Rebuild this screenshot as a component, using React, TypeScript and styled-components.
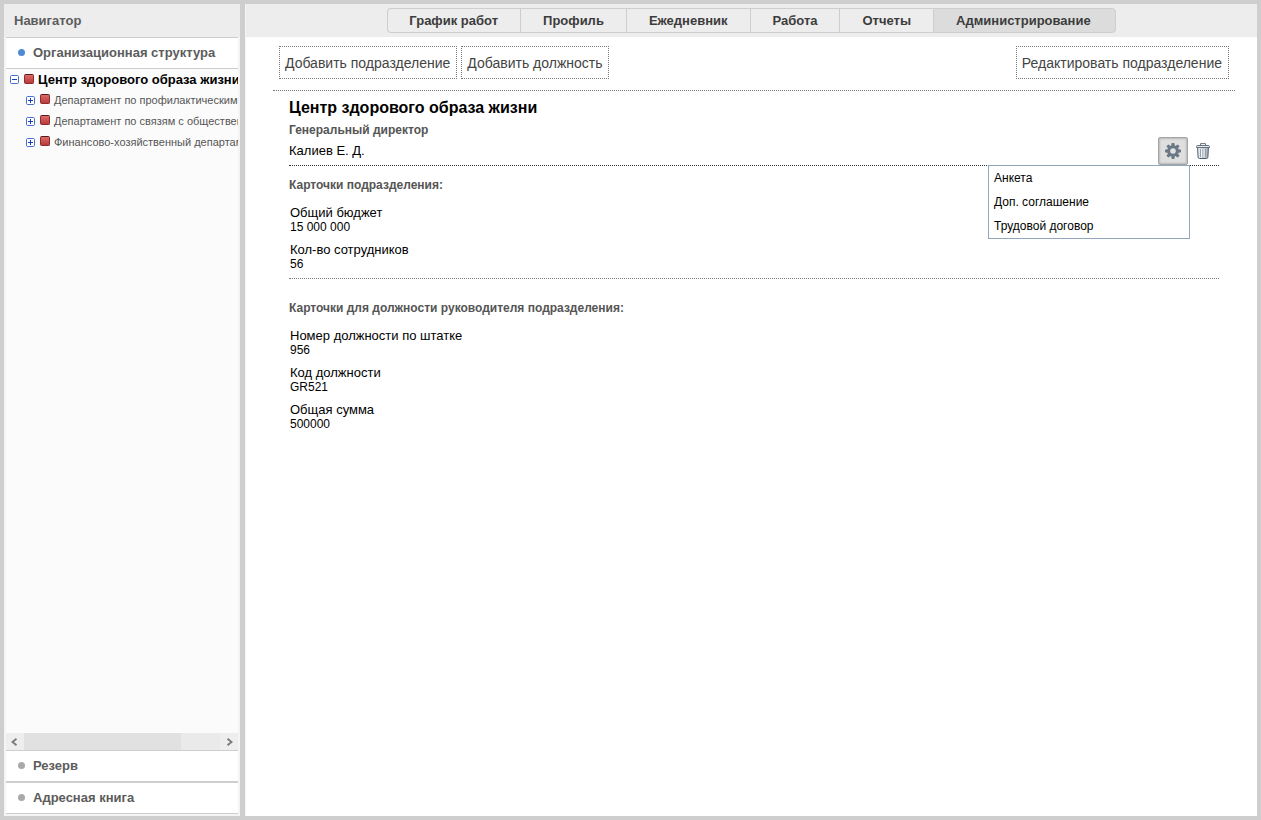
import React, { useState } from "react";
import styled, { createGlobalStyle } from "styled-components";

const GlobalStyle = createGlobalStyle`
  *, *::before, *::after { box-sizing: border-box; }
  html, body { margin: 0; }
  body, button {
    font-family: "Liberation Sans", Arial, Helvetica, sans-serif;
    font-size: 13px;
    color: #000;
  }
  button { margin: 0; padding: 0; border: 0; background: none; cursor: pointer; }
  h1, h2, h3, dl, dd, ul { margin: 0; padding: 0; }
  ul { list-style: none; }
  svg { display: block; flex: none; }
`;

const Shell = styled.div`
  display: flex;
  gap: 5px;
  min-height: 100vh;
  padding: 4px;
  background: #cecece;
`;

const Sidebar = styled.aside`
  display: flex;
  flex-direction: column;
  flex: 0 0 236px;
  min-width: 0;
  padding: 0 2px 2px;
  background: #f4f4f4;
`;

const SidebarTitle = styled.h2`
  height: 33px;
  margin: 0 -2px;
  padding-left: 10px;
  background: #ededed;
  font-size: 13px;
  line-height: 33px;
  color: #5c5c5c;
`;

const SectionButton = styled.button<{ $active?: boolean }>`
  display: flex;
  align-items: center;
  flex: none;
  gap: 8px;
  height: 32px;
  padding: 0 0 2px 12px;
  border-top: 1px solid #cecece;
  border-bottom: 1px solid #cecece;
  background: #fff;
  font-weight: bold;
  color: #5c5c5c;

  &::before {
    content: "";
    width: 7px;
    height: 7px;
    border-radius: 50%;
    background: ${(p) => (p.$active ? "#4f8ad5" : "#a9a9a9")};
  }
`;

const TreePane = styled.div`
  flex: 1;
  overflow: hidden;
  background: #fbfbfb;
`;

const Tree = styled.ul`
  white-space: nowrap;
`;

const TreeRow = styled.div<{ $root?: boolean }>`
  display: flex;
  align-items: center;
  gap: 4px;
  height: 21px;
  padding-left: ${(p) => (p.$root ? "4px" : "20px")};
  font-size: ${(p) => (p.$root ? "13px" : "11px")};
  font-weight: ${(p) => (p.$root ? "bold" : "normal")};
  line-height: ${(p) => (p.$root ? "21px" : "20px")};
  color: ${(p) => (p.$root ? "#000" : "#555")};
`;

const UnitName = styled.span`
  align-self: flex-start;
`;

const Toggle = styled.button`
  display: flex;
  flex: none;
  margin-right: 1px;
`;

const UnitIcon = styled.span<{ $root?: boolean }>`
  flex: none;
  width: 10px;
  height: 10px;
  margin-bottom: ${(p) => (p.$root ? "2px" : "4px")};
  border: 1px solid #8c2a2c;
  border-top-color: #561a1c;
  border-radius: 2px;
  background: linear-gradient(#de6a68, #b93a3c);
`;

const ScrollBar = styled.div`
  display: flex;
  flex: none;
  height: 17px;
  background: #eaeaea;
`;

const ScrollButton = styled.button`
  display: grid;
  place-items: center;
  flex: 0 0 18px;
  background: #eee;
`;

const ScrollTrack = styled.div`
  flex: 1;
`;

const ScrollThumb = styled.div`
  width: 80%;
  height: 100%;
  background: #e1e1e1;
`;

const Main = styled.main`
  flex: 1;
  min-width: 0;
  border-left: 1px solid #f4f4f4;
  background: #fff;
`;

const TabBar = styled.nav`
  display: flex;
  justify-content: center;
  height: 33px;
  padding: 4px 0;
  background: #ededed;
`;

const Tab = styled.button<{ $active?: boolean }>`
  padding: 0 22px;
  border: 1px solid #cecece;
  border-right-width: 0;
  background: ${(p) => (p.$active ? "#dcdcdc" : "#ededed")};
  font-weight: bold;
  color: #3c3c3c;

  &:first-child { padding-left: 21px; border-radius: 4px 0 0 4px; }
  &:last-child { padding-right: 24px; border-right-width: 1px; border-radius: 0 4px 4px 0; }
`;

const Page = styled.div`
  padding: 9px 22px 20px 27px;
`;

const Toolbar = styled.div`
  display: flex;
  gap: 4px;
  padding: 0 6px 11px;
  border-bottom: 1px dotted #777;
`;

const ToolbarButton = styled.button<{ $end?: boolean }>`
  height: 33px;
  padding: 0 6px 0 5px;
  margin-left: ${(p) => (p.$end ? "auto" : "0")};
  border: 1px dotted #777;
  font-size: 14px;
  color: #444;
`;

const Details = styled.div`
  padding: 7px 16px 0;
`;

const UnitTitle = styled.h1`
  margin-bottom: 5px;
  font-size: 16px;
  line-height: 20px;
`;

const Position = styled.h2`
  font-size: 12px;
  line-height: 14px;
  color: #555;
`;

const PersonRow = styled.div`
  position: relative;
  display: flex;
  height: 29px;
  border-bottom: 1px dotted #333;
`;

const PersonName = styled.span`
  flex: 1;
  line-height: 27px;
`;

const GearButton = styled.button`
  display: grid;
  place-items: center;
  width: 30px;
  height: 28px;
  border: 1px solid #a5a5a5;
  border-radius: 2px;
  background: #dfdfdf;
  box-shadow: inset 0 0 2px 1px #b9b9b9;
`;

const TrashButton = styled.button`
  display: grid;
  place-items: center;
  width: 31px;
  height: 28px;
  padding-right: 1px;
`;

const Menu = styled.ul`
  position: absolute;
  top: 28px;
  right: 29px;
  width: 202px;
  border: 1px solid #90a7bc;
  background: #fff;
`;

const MenuItem = styled.button`
  width: 100%;
  height: 24px;
  padding: 0 5px;
  font-size: 12px;
  text-align: left;
`;

const CardSection = styled.section<{ $spaced?: boolean }>`
  padding: ${(p) => (p.$spaced ? "21px" : "11px")} 0 7px;

  & + & { border-top: 1px dotted #777; }
`;

const CardHeading = styled.h3`
  margin-bottom: 12px;
  font-size: 12px;
  line-height: 16px;
  color: #555;
`;

const Fields = styled.dl`
  display: grid;
  gap: 8px;
  padding-left: 1px;
`;

const FieldLabel = styled.dt`
  line-height: 15px;
`;

const FieldValue = styled.dd`
  font-size: 12px;
  line-height: 14px;
`;

const ToggleIcon = ({ open }: { open?: boolean }) => (
  <svg width="9" height="9" viewBox="0 0 9 9">
    <rect x=".5" y=".5" width="8" height="8" rx="1.2" fill="#fff" stroke="#4a6fd0" />
    <path d={open ? "M2 4.5h5" : "M2 4.5h5M4.5 2v5"} stroke="#1c3fae" />
  </svg>
);

const Arrow = ({ right }: { right?: boolean }) => (
  <svg width="8" height="8" viewBox="0 0 8 8">
    <path
      d={right ? "M2.5 .8L6.5 4L2.5 7.2" : "M5.5 .8L1.5 4L5.5 7.2"}
      fill="none"
      stroke="#7d7d7d"
      strokeWidth="2"
    />
  </svg>
);

const GearIcon = () => (
  <svg width="16" height="16" viewBox="-8 -8 16 16">
    <g fill="#6b7885">
      {[0, 45, 90, 135].map((angle) => (
        <path key={angle} d="M-1.9-5L-1.3-8H1.3L1.9-5V5L1.3 8H-1.3L-1.9 5Z" transform={`rotate(${angle})`} />
      ))}
      <circle r="5.4" />
    </g>
    <circle r="2.8" fill="#e2e2e2" />
  </svg>
);

const TrashIcon = () => (
  <svg width="14" height="16" viewBox="0 0 14 16">
    <defs>
      <linearGradient id="can" x1="0" x2="1" y1="0" y2="0">
        <stop offset="0" stopColor="#f2f5f7" />
        <stop offset="1" stopColor="#a3aeb8" />
      </linearGradient>
    </defs>
    <path d="M4.5 2V.6h5V2" fill="none" stroke="#66727e" />
    <path d="M1.6 4.5h10.8l-.5 9.6q-.1 1.4-1.4 1.4H3.5q-1.3 0-1.4-1.4Z" fill="url(#can)" stroke="#4f5d6b" />
    <path d="M4.5 6v8M7 6v8M9.5 6v8" stroke="#93a0ab" />
    <path d="M5.5 6v8M8 6v8" stroke="#fff" strokeWidth=".8" />
    <path d="M.5 4.5V3.6Q.5 2.5 1.8 2.5H12.2Q13.5 2.5 13.5 3.6V4.5Z" fill="#e6eaee" stroke="#66727e" />
  </svg>
);

const tabs = ["График работ", "Профиль", "Ежедневник", "Работа", "Отчеты", "Администрирование"];

const departments = [
  "Департамент по профилактическим программам",
  "Департамент по связям с общественностью",
  "Финансово-хозяйственный департамент",
];

const documents = ["Анкета", "Доп. соглашение", "Трудовой договор"];

const unitCards = [
  ["Общий бюджет", "15 000 000"],
  ["Кол-во сотрудников", "56"],
];

const headCards = [
  ["Номер должности по штатке", "956"],
  ["Код должности", "GR521"],
  ["Общая сумма", "500000"],
];

const FieldList = ({ items }: { items: string[][] }) => (
  <Fields>
    {items.map(([label, value]) => (
      <div key={label}>
        <FieldLabel>{label}</FieldLabel>
        <FieldValue>{value}</FieldValue>
      </div>
    ))}
  </Fields>
);

export default function App() {
  const [activeTab, setActiveTab] = useState("Администрирование");
  const [menuOpen, setMenuOpen] = useState(true);

  return (
    <Shell>
      <GlobalStyle />
      <Sidebar>
        <SidebarTitle>Навигатор</SidebarTitle>
        <SectionButton $active>Организационная структура</SectionButton>
        <TreePane>
          <Tree>
            <li>
              <TreeRow $root>
                <Toggle aria-label="Свернуть"><ToggleIcon open /></Toggle>
                <UnitIcon $root />
                <UnitName>Центр здорового образа жизни</UnitName>
              </TreeRow>
              <Tree>
                {departments.map((name) => (
                  <li key={name}>
                    <TreeRow>
                      <Toggle aria-label="Развернуть"><ToggleIcon /></Toggle>
                      <UnitIcon />
                      <UnitName>{name}</UnitName>
                    </TreeRow>
                  </li>
                ))}
              </Tree>
            </li>
          </Tree>
        </TreePane>
        <ScrollBar>
          <ScrollButton aria-label="Прокрутить влево"><Arrow /></ScrollButton>
          <ScrollTrack><ScrollThumb /></ScrollTrack>
          <ScrollButton aria-label="Прокрутить вправо"><Arrow right /></ScrollButton>
        </ScrollBar>
        <SectionButton>Резерв</SectionButton>
        <SectionButton>Адресная книга</SectionButton>
      </Sidebar>

      <Main>
        <TabBar>
          {tabs.map((tab) => (
            <Tab key={tab} $active={tab === activeTab} onClick={() => setActiveTab(tab)}>
              {tab}
            </Tab>
          ))}
        </TabBar>
        <Page>
          <Toolbar>
            <ToolbarButton>Добавить подразделение</ToolbarButton>
            <ToolbarButton>Добавить должность</ToolbarButton>
            <ToolbarButton $end>Редактировать подразделение</ToolbarButton>
          </Toolbar>
          <Details>
            <UnitTitle>Центр здорового образа жизни</UnitTitle>
            <Position>Генеральный директор</Position>
            <PersonRow>
              <PersonName>Калиев Е. Д.</PersonName>
              <GearButton aria-label="Документы" aria-expanded={menuOpen} onClick={() => setMenuOpen(!menuOpen)}>
                <GearIcon />
              </GearButton>
              <TrashButton aria-label="Удалить"><TrashIcon /></TrashButton>
              {menuOpen && (
                <Menu>
                  {documents.map((name) => (
                    <li key={name}><MenuItem>{name}</MenuItem></li>
                  ))}
                </Menu>
              )}
            </PersonRow>
            <CardSection>
              <CardHeading>Карточки подразделения:</CardHeading>
              <FieldList items={unitCards} />
            </CardSection>
            <CardSection $spaced>
              <CardHeading>Карточки для должности руководителя подразделения:</CardHeading>
              <FieldList items={headCards} />
            </CardSection>
          </Details>
        </Page>
      </Main>
    </Shell>
  );
}
